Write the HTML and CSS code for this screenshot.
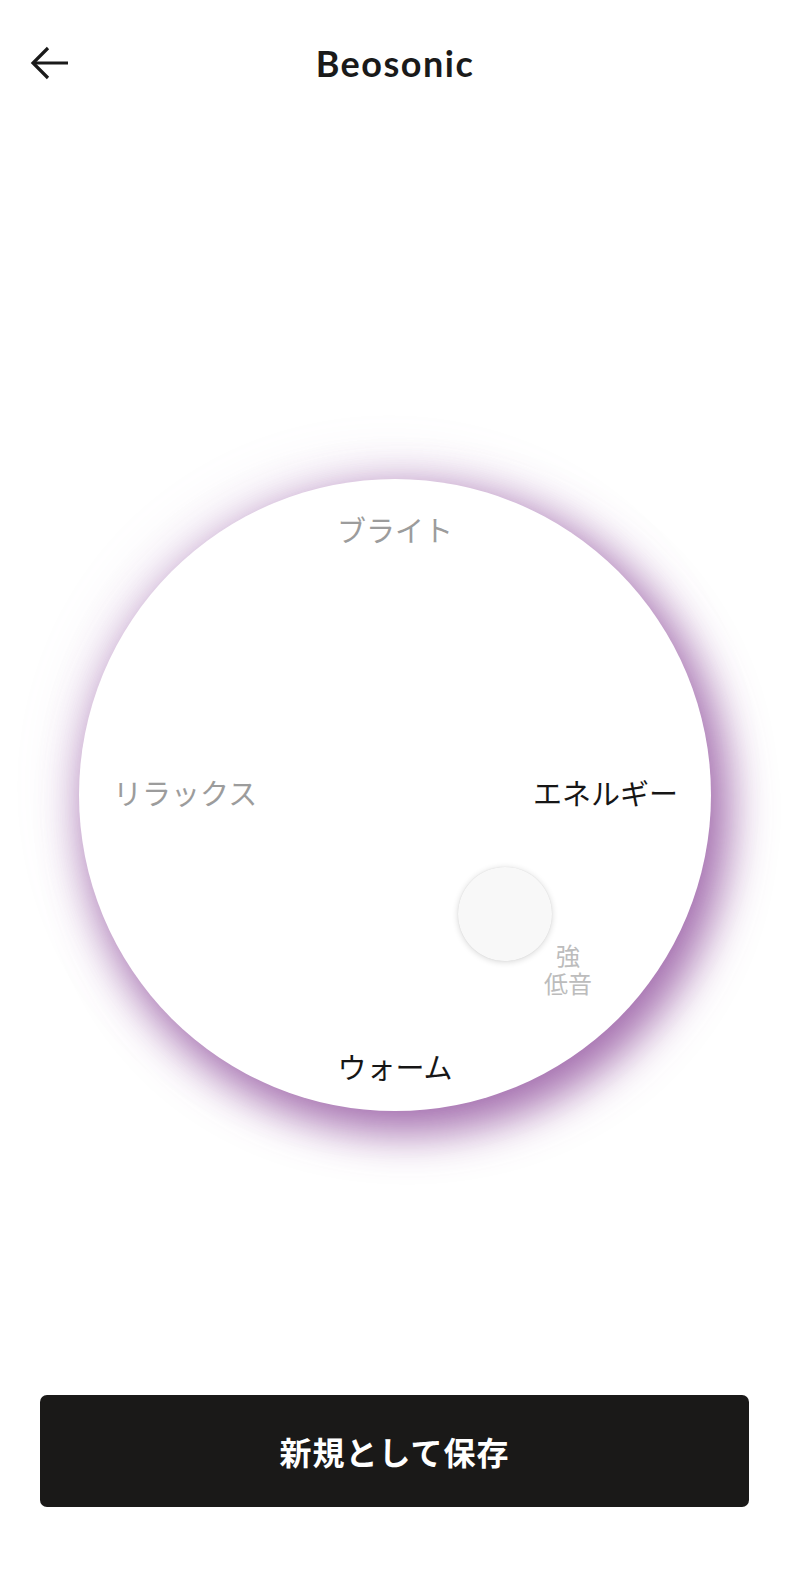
FILE: index.html
```html
<!DOCTYPE html>
<html lang="ja">
<head>
<meta charset="utf-8">
<title>Beosonic</title>
<link rel="stylesheet" href="styles.css">
</head>
<body>
<div class="page">
  <header class="header">
    <button class="back" aria-label="戻る">
      <svg width="40" height="36" viewBox="0 0 40 36" fill="none" stroke="#1a1a1a" stroke-width="3.2" stroke-linecap="butt">
        <path d="M3 18 H38"/>
        <path d="M18 3 L3 18 L18 33"/>
      </svg>
    </button>
    <h1 class="title">Beosonic</h1>
    <span class="spacer"></span>
  </header>

  <main class="stage">
    <div class="dial">
      <span class="label label-top">ブライト</span>
      <span class="label label-left">リラックス</span>
      <span class="label label-right active">エネルギー</span>
      <span class="label label-bottom active">ウォーム</span>
      <div class="label-bass">
        <span class="bass-line">強</span>
        <span class="bass-line">低音</span>
      </div>
      <span class="knob"></span>
    </div>
  </main>

  <div class="footer">
    <button class="save">新規として保存</button>
  </div>
</div>
</body>
</html>
```

FILE: styles.css
```css
* { box-sizing: border-box; }
html, body { margin: 0; padding: 0; background: #fff; }
body {
  font-family: "Noto Sans CJK JP", "Noto Sans", sans-serif;
  color: #1a1a1a;
}
.page {
  width: 800px;
  height: 1588px;
  display: flex;
  flex-direction: column;
}
.header {
  height: 126px;
  display: flex;
  align-items: center;
  justify-content: space-between;
  padding: 0 30px;
}
.back {
  width: 40px;
  height: 36px;
  padding: 0;
  border: 0;
  background: none;
  display: flex;
}
.spacer { width: 40px; }
.title {
  margin: 0;
  font-family: "Lato", "Open Sans", sans-serif;
  font-weight: 700;
  font-size: 36px;
  letter-spacing: 1.5px;
  color: #1a1a1a;
  transform: translateX(-5px);
}
.stage {
  flex: 1;
  padding-top: 353px;
  padding-left: 79px;
}
.dial {
  position: relative;
  width: 632px;
  height: 632px;
  border-radius: 50%;
  background: #fff;
  box-shadow:
    12px 16px 44px 6px rgba(140, 72, 152, 0.78),
    -6px -8px 56px 4px rgba(175, 130, 190, 0.16);
}
.label {
  position: absolute;
  font-size: 29px;
  line-height: 1;
  color: #9c9c9c;
  font-weight: 400;
  white-space: nowrap;
}
.label.active { color: #161616; }
.label-top { top: 36px; left: 0; right: 0; text-align: center; }
.label-left { left: 34px; top: 299px; }
.label-right { right: 33px; top: 299px; }
.label-bottom { top: 573px; left: 0; right: 0; text-align: center; }
.label-bass {
  position: absolute;
  left: 460px;
  top: 464px;
  width: 58px;
  display: flex;
  flex-direction: column;
  align-items: center;
}
.bass-line {
  display: block;
  font-family: "Liberation Sans", "Noto Sans CJK JP", sans-serif;
  font-size: 24px;
  line-height: 28px;
  height: 28px;
  color: #bcbcbc;
  white-space: nowrap;
}
.knob {
  position: absolute;
  left: 379px;
  top: 388px;
  width: 94px;
  height: 94px;
  border-radius: 50%;
  background: #f8f8f8;
  box-shadow: 0 1px 6px rgba(0, 0, 0, 0.16), 0 0 1px rgba(0, 0, 0, 0.12);
}
.footer {
  padding: 0 51px 81px 40px;
}
.save {
  width: 100%;
  height: 112px;
  border: 0;
  border-radius: 7px;
  background: #1a1918;
  color: #fff;
  font-family: "Noto Sans CJK JP", sans-serif;
  font-weight: 700;
  font-size: 32px;
  letter-spacing: 1px;
}
```
